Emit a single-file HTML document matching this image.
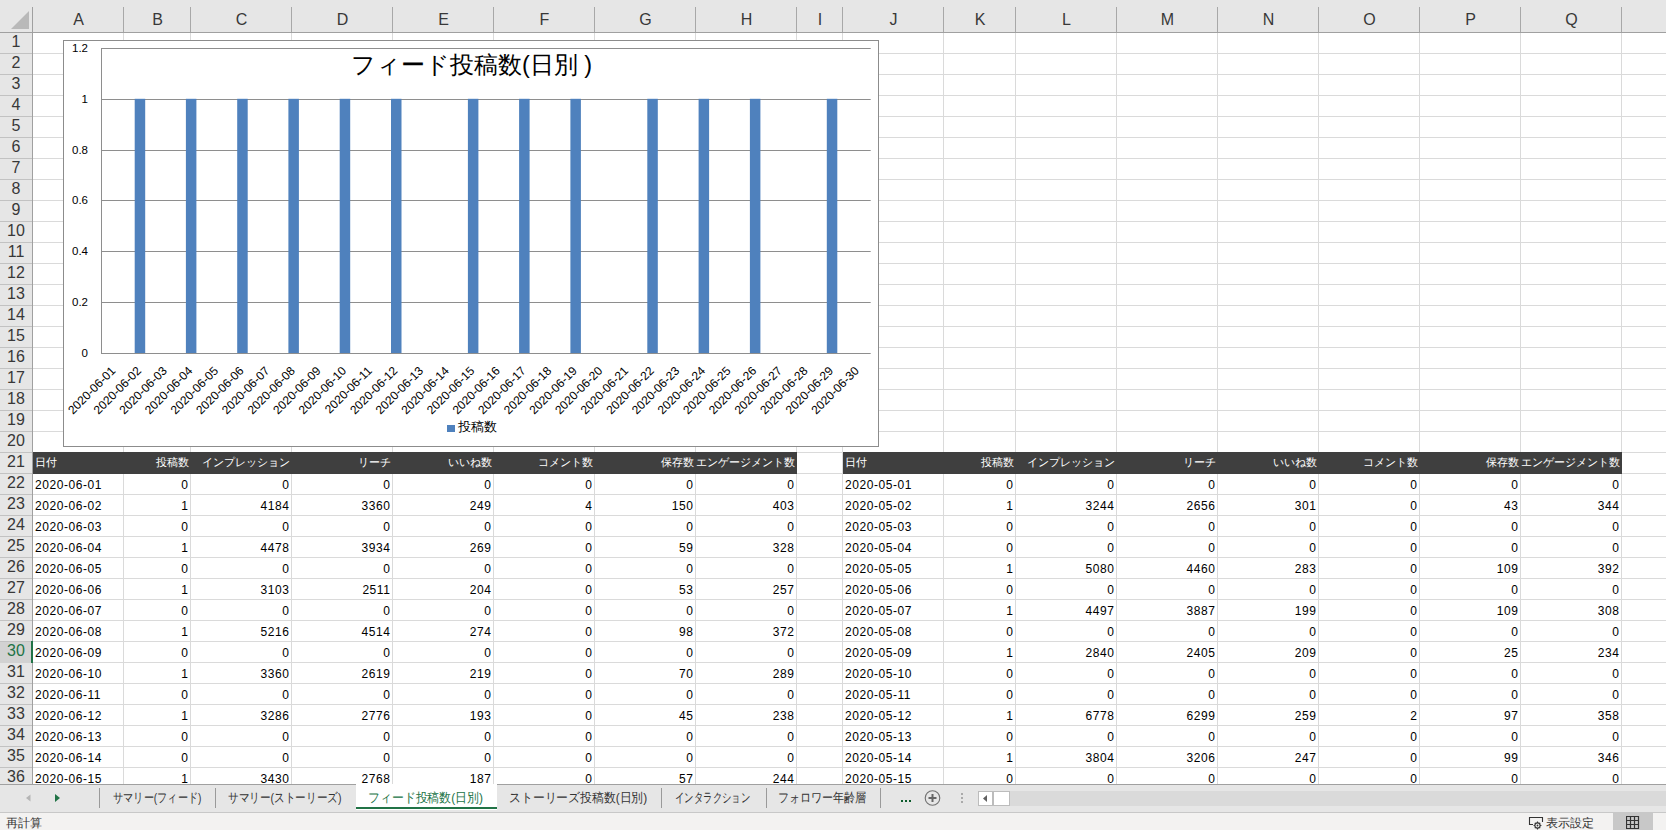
<!DOCTYPE html>
<html><head><meta charset="utf-8"><style>
*{margin:0;padding:0;box-sizing:border-box}
html,body{width:1666px;height:830px;overflow:hidden;background:#fff;font-family:"Liberation Sans",sans-serif;color:#000}
.a{position:absolute}
.vl{position:absolute;width:1px;background:#dadada}
.hl{position:absolute;height:1px;background:#dadada}
.ch{position:absolute;top:0;height:32px;line-height:40px;text-align:center;font-size:16px;color:#383838}
.rh{position:absolute;left:0;width:32px;height:21px;text-align:center;font-size:16px;line-height:18px;color:#383838}
.c{position:absolute;height:21px;font-size:12px;line-height:22px;white-space:nowrap;overflow:visible;letter-spacing:0.55px}
.l{padding-left:2px}
.r{text-align:right;padding-right:2.6px}
.hd{color:#fff;font-size:11px;letter-spacing:0;line-height:18px}
.hd.r{padding-right:2px}
.hd.l{padding-left:1.5px}
.tab{position:absolute;top:785px;height:27px;line-height:26px;font-size:13px;color:#333;white-space:nowrap}
.sep{position:absolute;top:788px;width:1px;height:20px;background:#9a9a9a}
</style></head><body>

<div class="a" style="left:0;top:0;width:1666px;height:32px;background:#e6e6e6"></div>
<div class="a" style="left:0;top:32px;width:1666px;height:1px;background:#a0a0a0"></div>
<div class="a" style="left:0;top:33px;width:32px;height:751px;background:#e6e6e6"></div>
<div class="a" style="left:32px;top:7px;width:1px;height:777px;background:#a0a0a0"></div>
<svg class="a" style="left:0;top:0" width="32" height="32"><polygon points="11,29 29,11 29,29" fill="#b9b9b9"/></svg>
<div class="a" style="left:123px;top:7px;width:1px;height:25px;background:#a8a8a8"></div>
<div class="a" style="left:190px;top:7px;width:1px;height:25px;background:#a8a8a8"></div>
<div class="a" style="left:291px;top:7px;width:1px;height:25px;background:#a8a8a8"></div>
<div class="a" style="left:392px;top:7px;width:1px;height:25px;background:#a8a8a8"></div>
<div class="a" style="left:493px;top:7px;width:1px;height:25px;background:#a8a8a8"></div>
<div class="a" style="left:594px;top:7px;width:1px;height:25px;background:#a8a8a8"></div>
<div class="a" style="left:695px;top:7px;width:1px;height:25px;background:#a8a8a8"></div>
<div class="a" style="left:796px;top:7px;width:1px;height:25px;background:#a8a8a8"></div>
<div class="a" style="left:842px;top:7px;width:1px;height:25px;background:#a8a8a8"></div>
<div class="a" style="left:943px;top:7px;width:1px;height:25px;background:#a8a8a8"></div>
<div class="a" style="left:1015px;top:7px;width:1px;height:25px;background:#a8a8a8"></div>
<div class="a" style="left:1116px;top:7px;width:1px;height:25px;background:#a8a8a8"></div>
<div class="a" style="left:1217px;top:7px;width:1px;height:25px;background:#a8a8a8"></div>
<div class="a" style="left:1318px;top:7px;width:1px;height:25px;background:#a8a8a8"></div>
<div class="a" style="left:1419px;top:7px;width:1px;height:25px;background:#a8a8a8"></div>
<div class="a" style="left:1520px;top:7px;width:1px;height:25px;background:#a8a8a8"></div>
<div class="a" style="left:1621px;top:7px;width:1px;height:25px;background:#a8a8a8"></div>
<div class="ch" style="left:33px;width:91px">A</div>
<div class="ch" style="left:124px;width:67px">B</div>
<div class="ch" style="left:191px;width:101px">C</div>
<div class="ch" style="left:292px;width:101px">D</div>
<div class="ch" style="left:393px;width:101px">E</div>
<div class="ch" style="left:494px;width:101px">F</div>
<div class="ch" style="left:595px;width:101px">G</div>
<div class="ch" style="left:696px;width:101px">H</div>
<div class="ch" style="left:797px;width:46px">I</div>
<div class="ch" style="left:843px;width:101px">J</div>
<div class="ch" style="left:944px;width:72px">K</div>
<div class="ch" style="left:1016px;width:101px">L</div>
<div class="ch" style="left:1117px;width:101px">M</div>
<div class="ch" style="left:1218px;width:101px">N</div>
<div class="ch" style="left:1319px;width:101px">O</div>
<div class="ch" style="left:1420px;width:101px">P</div>
<div class="ch" style="left:1521px;width:101px">Q</div>
<div class="vl" style="left:123px;top:33px;height:751px"></div>
<div class="vl" style="left:190px;top:33px;height:751px"></div>
<div class="vl" style="left:291px;top:33px;height:751px"></div>
<div class="vl" style="left:392px;top:33px;height:751px"></div>
<div class="vl" style="left:493px;top:33px;height:751px"></div>
<div class="vl" style="left:594px;top:33px;height:751px"></div>
<div class="vl" style="left:695px;top:33px;height:751px"></div>
<div class="vl" style="left:796px;top:33px;height:751px"></div>
<div class="vl" style="left:842px;top:33px;height:751px"></div>
<div class="vl" style="left:943px;top:33px;height:751px"></div>
<div class="vl" style="left:1015px;top:33px;height:751px"></div>
<div class="vl" style="left:1116px;top:33px;height:751px"></div>
<div class="vl" style="left:1217px;top:33px;height:751px"></div>
<div class="vl" style="left:1318px;top:33px;height:751px"></div>
<div class="vl" style="left:1419px;top:33px;height:751px"></div>
<div class="vl" style="left:1520px;top:33px;height:751px"></div>
<div class="vl" style="left:1621px;top:33px;height:751px"></div>
<div class="hl" style="left:33px;top:53px;width:1633px"></div>
<div class="a" style="left:0;top:53px;width:32px;height:1px;background:#c2c2c2"></div>
<div class="hl" style="left:33px;top:74px;width:1633px"></div>
<div class="a" style="left:0;top:74px;width:32px;height:1px;background:#c2c2c2"></div>
<div class="hl" style="left:33px;top:95px;width:1633px"></div>
<div class="a" style="left:0;top:95px;width:32px;height:1px;background:#c2c2c2"></div>
<div class="hl" style="left:33px;top:116px;width:1633px"></div>
<div class="a" style="left:0;top:116px;width:32px;height:1px;background:#c2c2c2"></div>
<div class="hl" style="left:33px;top:137px;width:1633px"></div>
<div class="a" style="left:0;top:137px;width:32px;height:1px;background:#c2c2c2"></div>
<div class="hl" style="left:33px;top:158px;width:1633px"></div>
<div class="a" style="left:0;top:158px;width:32px;height:1px;background:#c2c2c2"></div>
<div class="hl" style="left:33px;top:179px;width:1633px"></div>
<div class="a" style="left:0;top:179px;width:32px;height:1px;background:#c2c2c2"></div>
<div class="hl" style="left:33px;top:200px;width:1633px"></div>
<div class="a" style="left:0;top:200px;width:32px;height:1px;background:#c2c2c2"></div>
<div class="hl" style="left:33px;top:221px;width:1633px"></div>
<div class="a" style="left:0;top:221px;width:32px;height:1px;background:#c2c2c2"></div>
<div class="hl" style="left:33px;top:242px;width:1633px"></div>
<div class="a" style="left:0;top:242px;width:32px;height:1px;background:#c2c2c2"></div>
<div class="hl" style="left:33px;top:263px;width:1633px"></div>
<div class="a" style="left:0;top:263px;width:32px;height:1px;background:#c2c2c2"></div>
<div class="hl" style="left:33px;top:284px;width:1633px"></div>
<div class="a" style="left:0;top:284px;width:32px;height:1px;background:#c2c2c2"></div>
<div class="hl" style="left:33px;top:305px;width:1633px"></div>
<div class="a" style="left:0;top:305px;width:32px;height:1px;background:#c2c2c2"></div>
<div class="hl" style="left:33px;top:326px;width:1633px"></div>
<div class="a" style="left:0;top:326px;width:32px;height:1px;background:#c2c2c2"></div>
<div class="hl" style="left:33px;top:347px;width:1633px"></div>
<div class="a" style="left:0;top:347px;width:32px;height:1px;background:#c2c2c2"></div>
<div class="hl" style="left:33px;top:368px;width:1633px"></div>
<div class="a" style="left:0;top:368px;width:32px;height:1px;background:#c2c2c2"></div>
<div class="hl" style="left:33px;top:389px;width:1633px"></div>
<div class="a" style="left:0;top:389px;width:32px;height:1px;background:#c2c2c2"></div>
<div class="hl" style="left:33px;top:410px;width:1633px"></div>
<div class="a" style="left:0;top:410px;width:32px;height:1px;background:#c2c2c2"></div>
<div class="hl" style="left:33px;top:431px;width:1633px"></div>
<div class="a" style="left:0;top:431px;width:32px;height:1px;background:#c2c2c2"></div>
<div class="hl" style="left:33px;top:452px;width:1633px"></div>
<div class="a" style="left:0;top:452px;width:32px;height:1px;background:#c2c2c2"></div>
<div class="hl" style="left:33px;top:473px;width:1633px"></div>
<div class="a" style="left:0;top:473px;width:32px;height:1px;background:#c2c2c2"></div>
<div class="hl" style="left:33px;top:494px;width:1633px"></div>
<div class="a" style="left:0;top:494px;width:32px;height:1px;background:#c2c2c2"></div>
<div class="hl" style="left:33px;top:515px;width:1633px"></div>
<div class="a" style="left:0;top:515px;width:32px;height:1px;background:#c2c2c2"></div>
<div class="hl" style="left:33px;top:536px;width:1633px"></div>
<div class="a" style="left:0;top:536px;width:32px;height:1px;background:#c2c2c2"></div>
<div class="hl" style="left:33px;top:557px;width:1633px"></div>
<div class="a" style="left:0;top:557px;width:32px;height:1px;background:#c2c2c2"></div>
<div class="hl" style="left:33px;top:578px;width:1633px"></div>
<div class="a" style="left:0;top:578px;width:32px;height:1px;background:#c2c2c2"></div>
<div class="hl" style="left:33px;top:599px;width:1633px"></div>
<div class="a" style="left:0;top:599px;width:32px;height:1px;background:#c2c2c2"></div>
<div class="hl" style="left:33px;top:620px;width:1633px"></div>
<div class="a" style="left:0;top:620px;width:32px;height:1px;background:#c2c2c2"></div>
<div class="hl" style="left:33px;top:641px;width:1633px"></div>
<div class="a" style="left:0;top:641px;width:32px;height:1px;background:#c2c2c2"></div>
<div class="hl" style="left:33px;top:662px;width:1633px"></div>
<div class="a" style="left:0;top:662px;width:32px;height:1px;background:#c2c2c2"></div>
<div class="hl" style="left:33px;top:683px;width:1633px"></div>
<div class="a" style="left:0;top:683px;width:32px;height:1px;background:#c2c2c2"></div>
<div class="hl" style="left:33px;top:704px;width:1633px"></div>
<div class="a" style="left:0;top:704px;width:32px;height:1px;background:#c2c2c2"></div>
<div class="hl" style="left:33px;top:725px;width:1633px"></div>
<div class="a" style="left:0;top:725px;width:32px;height:1px;background:#c2c2c2"></div>
<div class="hl" style="left:33px;top:746px;width:1633px"></div>
<div class="a" style="left:0;top:746px;width:32px;height:1px;background:#c2c2c2"></div>
<div class="hl" style="left:33px;top:767px;width:1633px"></div>
<div class="a" style="left:0;top:767px;width:32px;height:1px;background:#c2c2c2"></div>
<div class="rh" style="top:33px;">1</div>
<div class="rh" style="top:54px;">2</div>
<div class="rh" style="top:75px;">3</div>
<div class="rh" style="top:96px;">4</div>
<div class="rh" style="top:117px;">5</div>
<div class="rh" style="top:138px;">6</div>
<div class="rh" style="top:159px;">7</div>
<div class="rh" style="top:180px;">8</div>
<div class="rh" style="top:201px;">9</div>
<div class="rh" style="top:222px;">10</div>
<div class="rh" style="top:243px;">11</div>
<div class="rh" style="top:264px;">12</div>
<div class="rh" style="top:285px;">13</div>
<div class="rh" style="top:306px;">14</div>
<div class="rh" style="top:327px;">15</div>
<div class="rh" style="top:348px;">16</div>
<div class="rh" style="top:369px;">17</div>
<div class="rh" style="top:390px;">18</div>
<div class="rh" style="top:411px;">19</div>
<div class="rh" style="top:432px;">20</div>
<div class="rh" style="top:453px;">21</div>
<div class="rh" style="top:474px;">22</div>
<div class="rh" style="top:495px;">23</div>
<div class="rh" style="top:516px;">24</div>
<div class="rh" style="top:537px;">25</div>
<div class="rh" style="top:558px;">26</div>
<div class="rh" style="top:579px;">27</div>
<div class="rh" style="top:600px;">28</div>
<div class="rh" style="top:621px;">29</div>
<div class="a" style="left:0;top:642px;width:32px;height:21px;background:#d2d2d2"></div>
<div class="a" style="left:31px;top:641px;width:2px;height:22px;background:#217346"></div>
<div class="rh" style="top:642px;color:#217346;">30</div>
<div class="rh" style="top:663px;">31</div>
<div class="rh" style="top:684px;">32</div>
<div class="rh" style="top:705px;">33</div>
<div class="rh" style="top:726px;">34</div>
<div class="rh" style="top:747px;">35</div>
<div class="rh" style="top:768px;">36</div>
<div class="a" style="left:33px;top:452px;width:764px;height:22px;background:#3f3f3f"></div>
<div class="a" style="left:843px;top:452px;width:779px;height:22px;background:#3f3f3f"></div>
<div class="c l hd" style="left:33px;top:453px;width:91px">日付</div>
<div class="c r hd" style="left:64px;top:453px;width:127px">投稿数</div>
<div class="c r hd" style="left:131px;top:453px;width:161px">インプレッション</div>
<div class="c r hd" style="left:232px;top:453px;width:161px">リーチ</div>
<div class="c r hd" style="left:333px;top:453px;width:161px">いいね数</div>
<div class="c r hd" style="left:434px;top:453px;width:161px">コメント数</div>
<div class="c r hd" style="left:535px;top:453px;width:161px">保存数</div>
<div class="c r hd" style="left:636px;top:453px;width:161px">エンゲージメント数</div>
<div class="c l" style="left:33px;top:474px;width:91px">2020-06-01</div>
<div class="c r" style="left:124px;top:474px;width:67px">0</div>
<div class="c r" style="left:191px;top:474px;width:101px">0</div>
<div class="c r" style="left:292px;top:474px;width:101px">0</div>
<div class="c r" style="left:393px;top:474px;width:101px">0</div>
<div class="c r" style="left:494px;top:474px;width:101px">0</div>
<div class="c r" style="left:595px;top:474px;width:101px">0</div>
<div class="c r" style="left:696px;top:474px;width:101px">0</div>
<div class="c l" style="left:33px;top:495px;width:91px">2020-06-02</div>
<div class="c r" style="left:124px;top:495px;width:67px">1</div>
<div class="c r" style="left:191px;top:495px;width:101px">4184</div>
<div class="c r" style="left:292px;top:495px;width:101px">3360</div>
<div class="c r" style="left:393px;top:495px;width:101px">249</div>
<div class="c r" style="left:494px;top:495px;width:101px">4</div>
<div class="c r" style="left:595px;top:495px;width:101px">150</div>
<div class="c r" style="left:696px;top:495px;width:101px">403</div>
<div class="c l" style="left:33px;top:516px;width:91px">2020-06-03</div>
<div class="c r" style="left:124px;top:516px;width:67px">0</div>
<div class="c r" style="left:191px;top:516px;width:101px">0</div>
<div class="c r" style="left:292px;top:516px;width:101px">0</div>
<div class="c r" style="left:393px;top:516px;width:101px">0</div>
<div class="c r" style="left:494px;top:516px;width:101px">0</div>
<div class="c r" style="left:595px;top:516px;width:101px">0</div>
<div class="c r" style="left:696px;top:516px;width:101px">0</div>
<div class="c l" style="left:33px;top:537px;width:91px">2020-06-04</div>
<div class="c r" style="left:124px;top:537px;width:67px">1</div>
<div class="c r" style="left:191px;top:537px;width:101px">4478</div>
<div class="c r" style="left:292px;top:537px;width:101px">3934</div>
<div class="c r" style="left:393px;top:537px;width:101px">269</div>
<div class="c r" style="left:494px;top:537px;width:101px">0</div>
<div class="c r" style="left:595px;top:537px;width:101px">59</div>
<div class="c r" style="left:696px;top:537px;width:101px">328</div>
<div class="c l" style="left:33px;top:558px;width:91px">2020-06-05</div>
<div class="c r" style="left:124px;top:558px;width:67px">0</div>
<div class="c r" style="left:191px;top:558px;width:101px">0</div>
<div class="c r" style="left:292px;top:558px;width:101px">0</div>
<div class="c r" style="left:393px;top:558px;width:101px">0</div>
<div class="c r" style="left:494px;top:558px;width:101px">0</div>
<div class="c r" style="left:595px;top:558px;width:101px">0</div>
<div class="c r" style="left:696px;top:558px;width:101px">0</div>
<div class="c l" style="left:33px;top:579px;width:91px">2020-06-06</div>
<div class="c r" style="left:124px;top:579px;width:67px">1</div>
<div class="c r" style="left:191px;top:579px;width:101px">3103</div>
<div class="c r" style="left:292px;top:579px;width:101px">2511</div>
<div class="c r" style="left:393px;top:579px;width:101px">204</div>
<div class="c r" style="left:494px;top:579px;width:101px">0</div>
<div class="c r" style="left:595px;top:579px;width:101px">53</div>
<div class="c r" style="left:696px;top:579px;width:101px">257</div>
<div class="c l" style="left:33px;top:600px;width:91px">2020-06-07</div>
<div class="c r" style="left:124px;top:600px;width:67px">0</div>
<div class="c r" style="left:191px;top:600px;width:101px">0</div>
<div class="c r" style="left:292px;top:600px;width:101px">0</div>
<div class="c r" style="left:393px;top:600px;width:101px">0</div>
<div class="c r" style="left:494px;top:600px;width:101px">0</div>
<div class="c r" style="left:595px;top:600px;width:101px">0</div>
<div class="c r" style="left:696px;top:600px;width:101px">0</div>
<div class="c l" style="left:33px;top:621px;width:91px">2020-06-08</div>
<div class="c r" style="left:124px;top:621px;width:67px">1</div>
<div class="c r" style="left:191px;top:621px;width:101px">5216</div>
<div class="c r" style="left:292px;top:621px;width:101px">4514</div>
<div class="c r" style="left:393px;top:621px;width:101px">274</div>
<div class="c r" style="left:494px;top:621px;width:101px">0</div>
<div class="c r" style="left:595px;top:621px;width:101px">98</div>
<div class="c r" style="left:696px;top:621px;width:101px">372</div>
<div class="c l" style="left:33px;top:642px;width:91px">2020-06-09</div>
<div class="c r" style="left:124px;top:642px;width:67px">0</div>
<div class="c r" style="left:191px;top:642px;width:101px">0</div>
<div class="c r" style="left:292px;top:642px;width:101px">0</div>
<div class="c r" style="left:393px;top:642px;width:101px">0</div>
<div class="c r" style="left:494px;top:642px;width:101px">0</div>
<div class="c r" style="left:595px;top:642px;width:101px">0</div>
<div class="c r" style="left:696px;top:642px;width:101px">0</div>
<div class="c l" style="left:33px;top:663px;width:91px">2020-06-10</div>
<div class="c r" style="left:124px;top:663px;width:67px">1</div>
<div class="c r" style="left:191px;top:663px;width:101px">3360</div>
<div class="c r" style="left:292px;top:663px;width:101px">2619</div>
<div class="c r" style="left:393px;top:663px;width:101px">219</div>
<div class="c r" style="left:494px;top:663px;width:101px">0</div>
<div class="c r" style="left:595px;top:663px;width:101px">70</div>
<div class="c r" style="left:696px;top:663px;width:101px">289</div>
<div class="c l" style="left:33px;top:684px;width:91px">2020-06-11</div>
<div class="c r" style="left:124px;top:684px;width:67px">0</div>
<div class="c r" style="left:191px;top:684px;width:101px">0</div>
<div class="c r" style="left:292px;top:684px;width:101px">0</div>
<div class="c r" style="left:393px;top:684px;width:101px">0</div>
<div class="c r" style="left:494px;top:684px;width:101px">0</div>
<div class="c r" style="left:595px;top:684px;width:101px">0</div>
<div class="c r" style="left:696px;top:684px;width:101px">0</div>
<div class="c l" style="left:33px;top:705px;width:91px">2020-06-12</div>
<div class="c r" style="left:124px;top:705px;width:67px">1</div>
<div class="c r" style="left:191px;top:705px;width:101px">3286</div>
<div class="c r" style="left:292px;top:705px;width:101px">2776</div>
<div class="c r" style="left:393px;top:705px;width:101px">193</div>
<div class="c r" style="left:494px;top:705px;width:101px">0</div>
<div class="c r" style="left:595px;top:705px;width:101px">45</div>
<div class="c r" style="left:696px;top:705px;width:101px">238</div>
<div class="c l" style="left:33px;top:726px;width:91px">2020-06-13</div>
<div class="c r" style="left:124px;top:726px;width:67px">0</div>
<div class="c r" style="left:191px;top:726px;width:101px">0</div>
<div class="c r" style="left:292px;top:726px;width:101px">0</div>
<div class="c r" style="left:393px;top:726px;width:101px">0</div>
<div class="c r" style="left:494px;top:726px;width:101px">0</div>
<div class="c r" style="left:595px;top:726px;width:101px">0</div>
<div class="c r" style="left:696px;top:726px;width:101px">0</div>
<div class="c l" style="left:33px;top:747px;width:91px">2020-06-14</div>
<div class="c r" style="left:124px;top:747px;width:67px">0</div>
<div class="c r" style="left:191px;top:747px;width:101px">0</div>
<div class="c r" style="left:292px;top:747px;width:101px">0</div>
<div class="c r" style="left:393px;top:747px;width:101px">0</div>
<div class="c r" style="left:494px;top:747px;width:101px">0</div>
<div class="c r" style="left:595px;top:747px;width:101px">0</div>
<div class="c r" style="left:696px;top:747px;width:101px">0</div>
<div class="c l" style="left:33px;top:768px;width:91px">2020-06-15</div>
<div class="c r" style="left:124px;top:768px;width:67px">1</div>
<div class="c r" style="left:191px;top:768px;width:101px">3430</div>
<div class="c r" style="left:292px;top:768px;width:101px">2768</div>
<div class="c r" style="left:393px;top:768px;width:101px">187</div>
<div class="c r" style="left:494px;top:768px;width:101px">0</div>
<div class="c r" style="left:595px;top:768px;width:101px">57</div>
<div class="c r" style="left:696px;top:768px;width:101px">244</div>
<div class="c l hd" style="left:843px;top:453px;width:101px">日付</div>
<div class="c r hd" style="left:884px;top:453px;width:132px">投稿数</div>
<div class="c r hd" style="left:956px;top:453px;width:161px">インプレッション</div>
<div class="c r hd" style="left:1057px;top:453px;width:161px">リーチ</div>
<div class="c r hd" style="left:1158px;top:453px;width:161px">いいね数</div>
<div class="c r hd" style="left:1259px;top:453px;width:161px">コメント数</div>
<div class="c r hd" style="left:1360px;top:453px;width:161px">保存数</div>
<div class="c r hd" style="left:1461px;top:453px;width:161px">エンゲージメント数</div>
<div class="c l" style="left:843px;top:474px;width:101px">2020-05-01</div>
<div class="c r" style="left:944px;top:474px;width:72px">0</div>
<div class="c r" style="left:1016px;top:474px;width:101px">0</div>
<div class="c r" style="left:1117px;top:474px;width:101px">0</div>
<div class="c r" style="left:1218px;top:474px;width:101px">0</div>
<div class="c r" style="left:1319px;top:474px;width:101px">0</div>
<div class="c r" style="left:1420px;top:474px;width:101px">0</div>
<div class="c r" style="left:1521px;top:474px;width:101px">0</div>
<div class="c l" style="left:843px;top:495px;width:101px">2020-05-02</div>
<div class="c r" style="left:944px;top:495px;width:72px">1</div>
<div class="c r" style="left:1016px;top:495px;width:101px">3244</div>
<div class="c r" style="left:1117px;top:495px;width:101px">2656</div>
<div class="c r" style="left:1218px;top:495px;width:101px">301</div>
<div class="c r" style="left:1319px;top:495px;width:101px">0</div>
<div class="c r" style="left:1420px;top:495px;width:101px">43</div>
<div class="c r" style="left:1521px;top:495px;width:101px">344</div>
<div class="c l" style="left:843px;top:516px;width:101px">2020-05-03</div>
<div class="c r" style="left:944px;top:516px;width:72px">0</div>
<div class="c r" style="left:1016px;top:516px;width:101px">0</div>
<div class="c r" style="left:1117px;top:516px;width:101px">0</div>
<div class="c r" style="left:1218px;top:516px;width:101px">0</div>
<div class="c r" style="left:1319px;top:516px;width:101px">0</div>
<div class="c r" style="left:1420px;top:516px;width:101px">0</div>
<div class="c r" style="left:1521px;top:516px;width:101px">0</div>
<div class="c l" style="left:843px;top:537px;width:101px">2020-05-04</div>
<div class="c r" style="left:944px;top:537px;width:72px">0</div>
<div class="c r" style="left:1016px;top:537px;width:101px">0</div>
<div class="c r" style="left:1117px;top:537px;width:101px">0</div>
<div class="c r" style="left:1218px;top:537px;width:101px">0</div>
<div class="c r" style="left:1319px;top:537px;width:101px">0</div>
<div class="c r" style="left:1420px;top:537px;width:101px">0</div>
<div class="c r" style="left:1521px;top:537px;width:101px">0</div>
<div class="c l" style="left:843px;top:558px;width:101px">2020-05-05</div>
<div class="c r" style="left:944px;top:558px;width:72px">1</div>
<div class="c r" style="left:1016px;top:558px;width:101px">5080</div>
<div class="c r" style="left:1117px;top:558px;width:101px">4460</div>
<div class="c r" style="left:1218px;top:558px;width:101px">283</div>
<div class="c r" style="left:1319px;top:558px;width:101px">0</div>
<div class="c r" style="left:1420px;top:558px;width:101px">109</div>
<div class="c r" style="left:1521px;top:558px;width:101px">392</div>
<div class="c l" style="left:843px;top:579px;width:101px">2020-05-06</div>
<div class="c r" style="left:944px;top:579px;width:72px">0</div>
<div class="c r" style="left:1016px;top:579px;width:101px">0</div>
<div class="c r" style="left:1117px;top:579px;width:101px">0</div>
<div class="c r" style="left:1218px;top:579px;width:101px">0</div>
<div class="c r" style="left:1319px;top:579px;width:101px">0</div>
<div class="c r" style="left:1420px;top:579px;width:101px">0</div>
<div class="c r" style="left:1521px;top:579px;width:101px">0</div>
<div class="c l" style="left:843px;top:600px;width:101px">2020-05-07</div>
<div class="c r" style="left:944px;top:600px;width:72px">1</div>
<div class="c r" style="left:1016px;top:600px;width:101px">4497</div>
<div class="c r" style="left:1117px;top:600px;width:101px">3887</div>
<div class="c r" style="left:1218px;top:600px;width:101px">199</div>
<div class="c r" style="left:1319px;top:600px;width:101px">0</div>
<div class="c r" style="left:1420px;top:600px;width:101px">109</div>
<div class="c r" style="left:1521px;top:600px;width:101px">308</div>
<div class="c l" style="left:843px;top:621px;width:101px">2020-05-08</div>
<div class="c r" style="left:944px;top:621px;width:72px">0</div>
<div class="c r" style="left:1016px;top:621px;width:101px">0</div>
<div class="c r" style="left:1117px;top:621px;width:101px">0</div>
<div class="c r" style="left:1218px;top:621px;width:101px">0</div>
<div class="c r" style="left:1319px;top:621px;width:101px">0</div>
<div class="c r" style="left:1420px;top:621px;width:101px">0</div>
<div class="c r" style="left:1521px;top:621px;width:101px">0</div>
<div class="c l" style="left:843px;top:642px;width:101px">2020-05-09</div>
<div class="c r" style="left:944px;top:642px;width:72px">1</div>
<div class="c r" style="left:1016px;top:642px;width:101px">2840</div>
<div class="c r" style="left:1117px;top:642px;width:101px">2405</div>
<div class="c r" style="left:1218px;top:642px;width:101px">209</div>
<div class="c r" style="left:1319px;top:642px;width:101px">0</div>
<div class="c r" style="left:1420px;top:642px;width:101px">25</div>
<div class="c r" style="left:1521px;top:642px;width:101px">234</div>
<div class="c l" style="left:843px;top:663px;width:101px">2020-05-10</div>
<div class="c r" style="left:944px;top:663px;width:72px">0</div>
<div class="c r" style="left:1016px;top:663px;width:101px">0</div>
<div class="c r" style="left:1117px;top:663px;width:101px">0</div>
<div class="c r" style="left:1218px;top:663px;width:101px">0</div>
<div class="c r" style="left:1319px;top:663px;width:101px">0</div>
<div class="c r" style="left:1420px;top:663px;width:101px">0</div>
<div class="c r" style="left:1521px;top:663px;width:101px">0</div>
<div class="c l" style="left:843px;top:684px;width:101px">2020-05-11</div>
<div class="c r" style="left:944px;top:684px;width:72px">0</div>
<div class="c r" style="left:1016px;top:684px;width:101px">0</div>
<div class="c r" style="left:1117px;top:684px;width:101px">0</div>
<div class="c r" style="left:1218px;top:684px;width:101px">0</div>
<div class="c r" style="left:1319px;top:684px;width:101px">0</div>
<div class="c r" style="left:1420px;top:684px;width:101px">0</div>
<div class="c r" style="left:1521px;top:684px;width:101px">0</div>
<div class="c l" style="left:843px;top:705px;width:101px">2020-05-12</div>
<div class="c r" style="left:944px;top:705px;width:72px">1</div>
<div class="c r" style="left:1016px;top:705px;width:101px">6778</div>
<div class="c r" style="left:1117px;top:705px;width:101px">6299</div>
<div class="c r" style="left:1218px;top:705px;width:101px">259</div>
<div class="c r" style="left:1319px;top:705px;width:101px">2</div>
<div class="c r" style="left:1420px;top:705px;width:101px">97</div>
<div class="c r" style="left:1521px;top:705px;width:101px">358</div>
<div class="c l" style="left:843px;top:726px;width:101px">2020-05-13</div>
<div class="c r" style="left:944px;top:726px;width:72px">0</div>
<div class="c r" style="left:1016px;top:726px;width:101px">0</div>
<div class="c r" style="left:1117px;top:726px;width:101px">0</div>
<div class="c r" style="left:1218px;top:726px;width:101px">0</div>
<div class="c r" style="left:1319px;top:726px;width:101px">0</div>
<div class="c r" style="left:1420px;top:726px;width:101px">0</div>
<div class="c r" style="left:1521px;top:726px;width:101px">0</div>
<div class="c l" style="left:843px;top:747px;width:101px">2020-05-14</div>
<div class="c r" style="left:944px;top:747px;width:72px">1</div>
<div class="c r" style="left:1016px;top:747px;width:101px">3804</div>
<div class="c r" style="left:1117px;top:747px;width:101px">3206</div>
<div class="c r" style="left:1218px;top:747px;width:101px">247</div>
<div class="c r" style="left:1319px;top:747px;width:101px">0</div>
<div class="c r" style="left:1420px;top:747px;width:101px">99</div>
<div class="c r" style="left:1521px;top:747px;width:101px">346</div>
<div class="c l" style="left:843px;top:768px;width:101px">2020-05-15</div>
<div class="c r" style="left:944px;top:768px;width:72px">0</div>
<div class="c r" style="left:1016px;top:768px;width:101px">0</div>
<div class="c r" style="left:1117px;top:768px;width:101px">0</div>
<div class="c r" style="left:1218px;top:768px;width:101px">0</div>
<div class="c r" style="left:1319px;top:768px;width:101px">0</div>
<div class="c r" style="left:1420px;top:768px;width:101px">0</div>
<div class="c r" style="left:1521px;top:768px;width:101px">0</div>
<div class="a" style="left:63px;top:40px;width:816px;height:407px;background:#fff;border:1px solid #8c8c8c"></div>
<svg class="a" style="left:0;top:0" width="1666" height="830"><line x1="101.7" y1="353.5" x2="870.7" y2="353.5" stroke="#8e8e8e" stroke-width="1"/><text x="88" y="356.5" text-anchor="end" font-size="11.5" font-family="Liberation Sans">0</text><line x1="101.7" y1="302.5" x2="870.7" y2="302.5" stroke="#8e8e8e" stroke-width="1"/><text x="88" y="305.5" text-anchor="end" font-size="11.5" font-family="Liberation Sans">0.2</text><line x1="101.7" y1="251.5" x2="870.7" y2="251.5" stroke="#8e8e8e" stroke-width="1"/><text x="88" y="254.5" text-anchor="end" font-size="11.5" font-family="Liberation Sans">0.4</text><line x1="101.7" y1="200.5" x2="870.7" y2="200.5" stroke="#8e8e8e" stroke-width="1"/><text x="88" y="203.5" text-anchor="end" font-size="11.5" font-family="Liberation Sans">0.6</text><line x1="101.7" y1="150.5" x2="870.7" y2="150.5" stroke="#8e8e8e" stroke-width="1"/><text x="88" y="153.5" text-anchor="end" font-size="11.5" font-family="Liberation Sans">0.8</text><line x1="101.7" y1="99.5" x2="870.7" y2="99.5" stroke="#8e8e8e" stroke-width="1"/><text x="88" y="102.5" text-anchor="end" font-size="11.5" font-family="Liberation Sans">1</text><line x1="101.7" y1="48.5" x2="870.7" y2="48.5" stroke="#8e8e8e" stroke-width="1"/><text x="88" y="51.5" text-anchor="end" font-size="11.5" font-family="Liberation Sans">1.2</text><line x1="101.5" y1="48" x2="101.5" y2="354" stroke="#8e8e8e" stroke-width="1"/><rect x="134.7" y="98.8" width="10.5" height="254.2" fill="#4f81bd"/><rect x="185.9" y="98.8" width="10.5" height="254.2" fill="#4f81bd"/><rect x="237.2" y="98.8" width="10.5" height="254.2" fill="#4f81bd"/><rect x="288.4" y="98.8" width="10.5" height="254.2" fill="#4f81bd"/><rect x="339.7" y="98.8" width="10.5" height="254.2" fill="#4f81bd"/><rect x="391.0" y="98.8" width="10.5" height="254.2" fill="#4f81bd"/><rect x="467.9" y="98.8" width="10.5" height="254.2" fill="#4f81bd"/><rect x="519.1" y="98.8" width="10.5" height="254.2" fill="#4f81bd"/><rect x="570.4" y="98.8" width="10.5" height="254.2" fill="#4f81bd"/><rect x="647.3" y="98.8" width="10.5" height="254.2" fill="#4f81bd"/><rect x="698.6" y="98.8" width="10.5" height="254.2" fill="#4f81bd"/><rect x="749.9" y="98.8" width="10.5" height="254.2" fill="#4f81bd"/><rect x="826.8" y="98.8" width="10.5" height="254.2" fill="#4f81bd"/><text transform="translate(116.3,371.5) rotate(-45)" text-anchor="end" font-size="12" font-family="Liberation Sans">2020-06-01</text><text transform="translate(142.0,371.5) rotate(-45)" text-anchor="end" font-size="12" font-family="Liberation Sans">2020-06-02</text><text transform="translate(167.6,371.5) rotate(-45)" text-anchor="end" font-size="12" font-family="Liberation Sans">2020-06-03</text><text transform="translate(193.2,371.5) rotate(-45)" text-anchor="end" font-size="12" font-family="Liberation Sans">2020-06-04</text><text transform="translate(218.9,371.5) rotate(-45)" text-anchor="end" font-size="12" font-family="Liberation Sans">2020-06-05</text><text transform="translate(244.5,371.5) rotate(-45)" text-anchor="end" font-size="12" font-family="Liberation Sans">2020-06-06</text><text transform="translate(270.1,371.5) rotate(-45)" text-anchor="end" font-size="12" font-family="Liberation Sans">2020-06-07</text><text transform="translate(295.8,371.5) rotate(-45)" text-anchor="end" font-size="12" font-family="Liberation Sans">2020-06-08</text><text transform="translate(321.4,371.5) rotate(-45)" text-anchor="end" font-size="12" font-family="Liberation Sans">2020-06-09</text><text transform="translate(347.0,371.5) rotate(-45)" text-anchor="end" font-size="12" font-family="Liberation Sans">2020-06-10</text><text transform="translate(372.6,371.5) rotate(-45)" text-anchor="end" font-size="12" font-family="Liberation Sans">2020-06-11</text><text transform="translate(398.3,371.5) rotate(-45)" text-anchor="end" font-size="12" font-family="Liberation Sans">2020-06-12</text><text transform="translate(423.9,371.5) rotate(-45)" text-anchor="end" font-size="12" font-family="Liberation Sans">2020-06-13</text><text transform="translate(449.6,371.5) rotate(-45)" text-anchor="end" font-size="12" font-family="Liberation Sans">2020-06-14</text><text transform="translate(475.2,371.5) rotate(-45)" text-anchor="end" font-size="12" font-family="Liberation Sans">2020-06-15</text><text transform="translate(500.8,371.5) rotate(-45)" text-anchor="end" font-size="12" font-family="Liberation Sans">2020-06-16</text><text transform="translate(526.4,371.5) rotate(-45)" text-anchor="end" font-size="12" font-family="Liberation Sans">2020-06-17</text><text transform="translate(552.1,371.5) rotate(-45)" text-anchor="end" font-size="12" font-family="Liberation Sans">2020-06-18</text><text transform="translate(577.7,371.5) rotate(-45)" text-anchor="end" font-size="12" font-family="Liberation Sans">2020-06-19</text><text transform="translate(603.3,371.5) rotate(-45)" text-anchor="end" font-size="12" font-family="Liberation Sans">2020-06-20</text><text transform="translate(629.0,371.5) rotate(-45)" text-anchor="end" font-size="12" font-family="Liberation Sans">2020-06-21</text><text transform="translate(654.6,371.5) rotate(-45)" text-anchor="end" font-size="12" font-family="Liberation Sans">2020-06-22</text><text transform="translate(680.2,371.5) rotate(-45)" text-anchor="end" font-size="12" font-family="Liberation Sans">2020-06-23</text><text transform="translate(705.9,371.5) rotate(-45)" text-anchor="end" font-size="12" font-family="Liberation Sans">2020-06-24</text><text transform="translate(731.5,371.5) rotate(-45)" text-anchor="end" font-size="12" font-family="Liberation Sans">2020-06-25</text><text transform="translate(757.1,371.5) rotate(-45)" text-anchor="end" font-size="12" font-family="Liberation Sans">2020-06-26</text><text transform="translate(782.8,371.5) rotate(-45)" text-anchor="end" font-size="12" font-family="Liberation Sans">2020-06-27</text><text transform="translate(808.4,371.5) rotate(-45)" text-anchor="end" font-size="12" font-family="Liberation Sans">2020-06-28</text><text transform="translate(834.0,371.5) rotate(-45)" text-anchor="end" font-size="12" font-family="Liberation Sans">2020-06-29</text><text transform="translate(859.7,371.5) rotate(-45)" text-anchor="end" font-size="12" font-family="Liberation Sans">2020-06-30</text></svg>
<div class="a" style="left:0;top:52px;width:943px;text-align:center;font-size:23.5px;line-height:26px;padding-left:0">フィード投稿数(日別 )</div>
<div class="a" style="left:447px;top:425px;width:8px;height:7px;background:#4f81bd"></div>
<div class="a" style="left:458px;top:419px;font-size:13px;line-height:16px">投稿数</div>
<div class="a" style="left:0;top:784px;width:1666px;height:28px;background:#e6e6e6"></div>
<div class="a" style="left:0;top:784px;width:1666px;height:1px;background:#a0a0a0"></div>
<svg class="a" style="left:0;top:784px" width="100" height="28"><polygon points="30.5,10.5 30.5,17.5 26,14" fill="#b5b5b5"/><polygon points="55,10 55,18 60,14" fill="#217346"/></svg>
<div class="tab" style="left:112.8px;color:#333;transform:scaleX(0.7855);transform-origin:0 0">サマリー(フィード)</div>
<div class="tab" style="left:227.5px;color:#333;transform:scaleX(0.8185);transform-origin:0 0">サマリー(ストーリーズ)</div>
<div class="a" style="left:356px;top:784px;width:141px;height:26px;background:#fff"></div>
<div class="a" style="left:356px;top:807px;width:141px;height:2px;background:#217346"></div>
<div class="tab" style="left:367.5px;color:#217346;transform:scaleX(0.9151);transform-origin:0 0">フィード投稿数(日別)</div>
<div class="tab" style="left:509.1px;color:#333;transform:scaleX(0.9118);transform-origin:0 0">ストーリーズ投稿数(日別)</div>
<div class="tab" style="left:675.4px;color:#333;transform:scaleX(0.7231);transform-origin:0 0">インタラクション</div>
<div class="tab" style="left:778.0px;color:#333;transform:scaleX(0.8510);transform-origin:0 0">フォロワー年齢層</div>
<div class="sep" style="left:99px"></div>
<div class="sep" style="left:215px"></div>
<div class="sep" style="left:661px"></div>
<div class="sep" style="left:766px"></div>
<div class="sep" style="left:880px"></div>
<svg class="a" style="left:900px;top:799px" width="14" height="4"><rect x="1" y="1" width="2" height="2" fill="#0b5b2b"/><rect x="5" y="1" width="2" height="2" fill="#0b5b2b"/><rect x="9" y="1" width="2" height="2" fill="#0b5b2b"/></svg>
<svg class="a" style="left:924px;top:790px" width="18" height="18"><circle cx="8.5" cy="8" r="7.3" fill="none" stroke="#707070" stroke-width="1.1"/><path d="M8.5 4V12M4.5 8H12.5" stroke="#666" stroke-width="2"/></svg>
<svg class="a" style="left:958px;top:790px" width="6" height="18"><rect x="3" y="3" width="2" height="2" fill="#aaa"/><rect x="3" y="7" width="2" height="2" fill="#aaa"/><rect x="3" y="11" width="2" height="2" fill="#aaa"/></svg>
<div class="a" style="left:978px;top:791px;width:688px;height:15px;background:#dadada"></div>
<div class="a" style="left:978px;top:791px;width:15px;height:15px;background:#fff;border:1px solid #bcbcbc"></div>
<svg class="a" style="left:978px;top:791px" width="15" height="15"><polygon points="9,4 9,11 5,7.5" fill="#606060"/></svg>
<div class="a" style="left:993px;top:791px;width:17px;height:15px;background:#fff;border:1px solid #bcbcbc"></div>
<div class="a" style="left:0;top:812px;width:1666px;height:18px;background:#f3f2f1"></div>
<div class="a" style="left:0;top:812px;width:1666px;height:1px;background:#c8c8c8"></div>
<div class="a" style="left:6px;top:815px;font-size:12px;line-height:16px;color:#333">再計算</div>
<svg class="a" style="left:1528px;top:816px" width="16" height="14"><path d="M5 8.5H1.5V1.5H14.5V6" fill="none" stroke="#333" stroke-width="1.1"/><circle cx="9.5" cy="9.5" r="2.6" fill="none" stroke="#333" stroke-width="1.1"/><path d="M9.5 5.6V6.9M9.5 12.1V13.4M5.6 9.5H6.9M12.1 9.5H13.4M6.8 6.8L7.7 7.7M11.3 11.3L12.2 12.2M6.8 12.2L7.7 11.3M11.3 7.7L12.2 6.8" stroke="#333" stroke-width="1.1"/><circle cx="9.5" cy="9.5" r="0.9" fill="#333"/></svg>
<div class="a" style="left:1546px;top:815px;font-size:12px;line-height:16px;color:#333">表示設定</div>
<div class="a" style="left:1613px;top:813px;width:40px;height:17px;background:#c8c8c8"></div>
<svg class="a" style="left:1626px;top:816px" width="14" height="13"><path d="M0.5 0.5H12.5V12.5H0.5ZM4.5 0.5V12.5M8.5 0.5V12.5M0.5 4.5H12.5M0.5 8.5H12.5" fill="none" stroke="#333" stroke-width="1.2"/></svg>
</body></html>
